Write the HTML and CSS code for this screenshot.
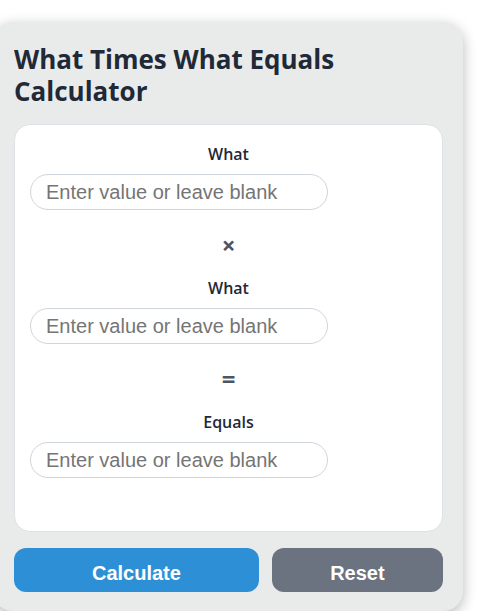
FILE: index.html
```html
<!DOCTYPE html>
<html lang="en">
<head>
  <meta charset="UTF-8">
  <meta name="viewport" content="width=device-width, initial-scale=1.0">
  <title>What Times What Equals Calculator</title>
  <link rel="stylesheet" href="styles.css">
</head>
<body>
  <div class="calculator">
    <h1 class="title">What Times What Equals Calculator</h1>

    <div class="fields">
      <label class="field-label" for="first">What</label>
      <input type="text" id="first" class="field-input" placeholder="Enter value or leave blank">

      <div class="operator">&times;</div>

      <label class="field-label" for="second">What</label>
      <input type="text" id="second" class="field-input" placeholder="Enter value or leave blank">

      <div class="operator">=</div>

      <label class="field-label" for="result">Equals</label>
      <input type="text" id="result" class="field-input" placeholder="Enter value or leave blank">
    </div>

    <div class="actions">
      <button type="button" class="btn btn-calc">Calculate</button>
      <button type="button" class="btn btn-reset">Reset</button>
    </div>
  </div>
</body>
</html>
```

FILE: styles.css
```css
body {
  margin: 0;
  background-color: #ffffff;
  font-family: 'Open Sans', 'Noto Sans', sans-serif;
  color: #1f2937;
}

.calculator {
  width: 470px;
  box-sizing: border-box;
  margin: 22px 0 0 -7px;
  padding: 21px 20px 19px 21px;
  background-color: #e9ebea;
  border-radius: 20px;
  box-shadow: 0 4px 14px rgba(0, 0, 0, 0.28);
}

.title {
  margin: 0 0 17px 0;
  font-size: 26px;
  line-height: 32px;
  font-weight: 700;
  color: #1f2937; /* dark slate */
}

.fields {
  display: flex;
  flex-direction: column;
  align-items: center;
  height: 408px;
  box-sizing: border-box;
  padding: 19px 15px 0 15px;
  background-color: #ffffff;
  border: 1px solid #dde1e5;
  border-radius: 16px;
}

.field-label {
  font-size: 16px;
  line-height: 20px;
  font-weight: 600;
  color: #1f2937;
  margin-bottom: 10px;
}

.field-input {
  align-self: flex-start;
  width: 298px;
  height: 36px;
  box-sizing: border-box;
  padding: 0 15px;
  border: 1px solid #cfd5db;
  border-radius: 18px;
  font-family: 'Liberation Sans', Arial, sans-serif;
  font-size: 20px;
  color: #1f2937;
  background-color: #ffffff;
  outline: none;
}

.field-input::placeholder {
  color: #757575;
}

.operator {
  margin: 23px 0 21px 0;
  font-size: 24px;
  line-height: 24px;
  font-weight: 700;
  color: #4b5563;
}

.actions {
  display: flex;
  gap: 13px;
  margin-top: 16px;
}

.btn {
  height: 44px;
  padding: 6px 0 0 0;
  border: none;
  border-radius: 12px;
  font-family: 'Liberation Sans', Arial, sans-serif;
  font-size: 20px;
  font-weight: 700;
  color: #ffffff;
  cursor: pointer;
}

.btn-calc {
  width: 246px;
  background-color: #2d90d6; /* blue */
}

.btn-reset {
  width: 172px;
  background-color: #6b7280; /* grey */
}
```
